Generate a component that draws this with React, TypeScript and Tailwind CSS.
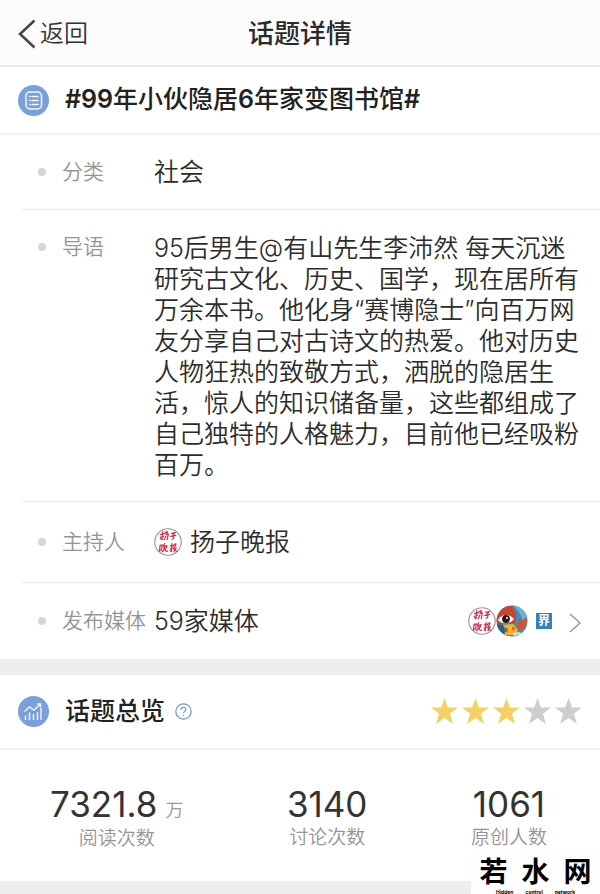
import type { ReactNode } from 'react';

function SealLogo() {
  return (
    <svg viewBox="0 0 28 28" className="h-7 w-7 shrink-0" role="img" aria-label="扬子晚报">
      <circle cx="14" cy="14" r="13.2" fill="#fff" stroke="#a58a90" strokeWidth="1.1" />
      <g fill="none" stroke="#c9354c" strokeWidth="1.1" strokeLinecap="round" strokeLinejoin="round" transform="translate(-2.4 -2) scale(1.14)">
        <path d="M7.5 7.5l4-1M9.8 5l-.6 7-1.4-.8M7.6 10l3-1M12 5.5l2-.5-1.5 2.5 2.2-.5-1 5M12.5 9l-1.5 3" />
        <path d="M17.5 6.5l3.2-.8-2 2.4c1.6 1 .8 3.6-.8 3.4M16.8 9.2l4.4-.9" />
        <path d="M7.5 17l-.6 5M7.3 17l2-.4-.5 4.4-1.8.5M11.5 15.5l-1.2 2M10.5 18l3-.7-.5 2-2.2.4M11.7 18c0 2.5-.8 3.6-2.3 4.5M12 20.5c0 1.5.8 2 2 1.5" />
        <path d="M16.3 17.5l3-.6M17.9 15.5l-.6 7-1-.6M16.2 20.3l2.3-.8M19.8 16l1.6-.4-.6 2-1 .2v4.7M20 19c.3 1.5 1 2.8 2 3.3M21.6 19l-2 3" />
      </g>
    </svg>
  );
}

function MascotLogo() {
  return (
    <svg viewBox="0 0 32 32" className="h-8 w-8 shrink-0" role="img" aria-label="媒体头像">
      <defs>
        <clipPath id="mascot">
          <circle cx="16" cy="16" r="15.5" />
        </clipPath>
      </defs>
      <g clipPath="url(#mascot)">
        <path fill="#3f8fb8" d="M0 0h32v32H0z" />
        <path fill="#6fb3cf" d="M17 0l6 7 4 8 5-3V0z" />
        <path fill="#c9432f" d="M0 14C2 5 8 0 17 1c0 3 2 5 3 8l-1 9-17 2z" />
        <path fill="#d8502f" d="M18 23c4-1 5-5 5-11l3 4 5-4c0 8-3 13-10 14z" />
        <path fill="#27637f" d="M0 19l7 1 4 12H4z" />
        <path fill="#f1b52e" d="M7 20l10-1 5 6-2 5H8l2-5z" />
        <path fill="#c9432f" d="M9 22l3 2-1 4-2-2zM16 22l3 1-2 3z" />
        <path fill="#fff" d="M2 15c3-6 11-7 16-1-4 5-12 6-16 1z" />
        <circle cx="10" cy="14" r="3.9" fill="#1c1a20" />
        <circle cx="11" cy="13" r="1" fill="#fff" />
        <path fill="#bfe0ee" d="M16 28l8-1 2 2-8 2z" />
      </g>
    </svg>
  );
}

function Row({ label, children, top = false }: { label: string; children: ReactNode; top?: boolean }) {
  return (
    <div className={top ? 'flex items-start' : 'flex items-center'}>
      <dt className="flex h-8 w-[132px] shrink-0 items-center gap-4 whitespace-nowrap text-[21px] leading-8 font-[350] text-[#959595]">
        <span className="ml-4 h-2 w-2 shrink-0 rounded-full bg-[#d6d6d6]" />
        {label}
      </dt>
      <dd className="flex min-w-0 flex-1 items-center text-[25px] leading-[31px] font-[350] text-[#2c2c2c]">{children}</dd>
    </div>
  );
}

function Star({ on }: { on: boolean }) {
  return (
    <svg viewBox="0 0 27 27" className="h-[27px] w-[27px]" fill={on ? '#f6cf66' : '#cdcdcd'}>
      <path d="M13.5 0l3.4 9.500H27l-8.100 6.200 3.100 10.300-8.500-6-8.500 6 3.100-10.300L0 9.500h10.100z" />
    </svg>
  );
}

function Stat({ value, unit, label }: { value: string; unit?: string; label: string }) {
  return (
    <div className="flex flex-col items-center">
      <dt className="order-last text-[19px] leading-7 font-[350] text-[#959595]">{label}</dt>
      <dd className="text-[35px] leading-10 text-[#333]">
        {value}
        {unit && <span className="ml-2 text-lg font-[350] text-[#999]">{unit}</span>}
      </dd>
    </div>
  );
}

export default function App() {
  return (
    <div className="min-h-screen bg-[#eee] font-['Inter','Noto_Sans_CJK_SC',sans-serif]" lang="zh-CN">
      <header className="grid h-[67px] grid-cols-[1fr_auto_1fr] items-center border-b-2 border-[#e9e9e9] bg-[#fbfbfb] px-[18px] pt-[2px]">
        <button type="button" className="flex items-center gap-1 text-2xl font-[350] text-[#333]">
          <svg viewBox="0 0 18 30" className="h-[30px] w-[18px]" fill="none" stroke="#444" strokeWidth="2.5">
            <path d="M16.5 1.5L2 15l14.5 13.5" />
          </svg>
          返回
        </button>
        <h1 className="text-[26px] font-medium text-[#2a2a2a]">话题详情</h1>
      </header>

      <section className="bg-white">
        <div className="flex h-[68px] items-center gap-4 border-b-2 border-[#f3f3f3] px-[18px]">
          <svg viewBox="0 0 31 31" className="h-[31px] w-[31px] shrink-0">
            <circle cx="15.5" cy="15.5" r="15.5" fill="#7b9fd8" />
            <g fill="none" stroke="#f4f8ff" strokeWidth="1.5" strokeLinecap="round">
              <rect x="8" y="7" width="15.5" height="17" rx="4" />
              <path d="M11.5 11.5h.5M14 11.5h6M11.5 15.5h.5M14 15.5h6M11.5 19.5h.5M14 19.5h6" />
            </g>
          </svg>
          <h2 className="text-[25px] font-medium text-[#222]">
            <span className="font-semibold">#99</span>年小伙隐居<span className="font-semibold">6</span>年家变图书馆
            <span className="font-semibold">#</span>
          </h2>
        </div>

        <dl className="ml-[22px] divide-y divide-[#ebebeb]">
          <div className="py-[21px]">
            <Row label="分类">社会</Row>
          </div>
          <div className="pt-[21px] pr-[18px] pb-5">
            <Row label="导语" top>
              <p className="pt-[2px]">
                95后男生@有山先生李沛然 每天沉迷研究古文化、历史、国学，现在居所有万余本书。他化身“赛博隐士”向百万网友分享自己对古诗文的热爱。他对历史人物狂热的致敬方式，洒脱的隐居生活，惊人的知识储备量，这些都组成了自己独特的人格魅力，目前他已经吸粉百万。
              </p>
            </Row>
          </div>
          <div className="py-6">
            <Row label="主持人">
              <span className="flex items-center gap-2">
                <SealLogo />
                扬子晚报
              </span>
            </Row>
          </div>
          <div className="py-[22px] pr-[18px]">
            <Row label="发布媒体">
              <span className="flex-1">59家媒体</span>
              <span className="flex items-center">
                <SealLogo />
                <MascotLogo />
                <span className="mx-2 flex h-4 w-4 items-center justify-center bg-[#3482bd] text-xs leading-4 font-bold text-white">界</span>
                <button type="button" aria-label="查看全部媒体" className="ml-2 pt-1">
                  <svg viewBox="0 0 14 20" className="h-5 w-[14px]" fill="none" stroke="#999" strokeWidth="1.5">
                    <path d="M2 1l10 9L2 19" />
                  </svg>
                </button>
              </span>
            </Row>
          </div>
        </dl>
      </section>

      <section className="mt-4 bg-white">
        <div className="flex h-[75px] items-center border-b-2 border-[#f3f3f3] px-[18px]">
          <svg viewBox="0 0 31 31" className="h-[31px] w-[31px] shrink-0">
            <circle cx="15.5" cy="15.5" r="15.5" fill="#7b9fd8" />
            <g fill="none" stroke="#eef4ff" strokeWidth="1.4">
              <path d="M7.5 24v-4.500M11.5 24v-7.500M15.5 24v-6M19.5 24v-8M23 24V12" />
              <path d="M6.5 15.5l5-4.500 4.500 3 6-5.500M19 8h3.500v3.500" />
            </g>
          </svg>
          <h2 className="ml-4 text-[25px] font-medium text-[#222]">话题总览</h2>
          <button type="button" aria-label="说明" className="ml-[10px]">
            <svg viewBox="0 0 17 17" className="h-[17px] w-[17px]" fill="none" stroke="#6f96cf" strokeWidth="1.2">
              <circle cx="8.5" cy="8.5" r="7.7" />
              <path d="M6 6.8c0-3.200 5-3.200 5-.3 0 1.800-2.500 1.900-2.500 3.800M8.5 11.7v1.300" />
            </svg>
          </button>
          <div className="ml-auto flex gap-1" role="img" aria-label="3 / 5">
            {[1, 2, 3, 4, 5].map((n) => (
              <Star key={n} on={n <= 3} />
            ))}
          </div>
        </div>
        <dl className="flex justify-between pt-[34px] pr-[53px] pb-7 pl-[50px]">
          <Stat value="7321.8" unit="万" label="阅读次数" />
          <Stat value="3140" label="讨论次数" />
          <Stat value="1061" label="原创人数" />
        </dl>
      </section>

      <div className="fixed right-0 bottom-0 flex h-10 w-[129px] flex-col items-center overflow-hidden bg-[#fdfdfd] text-black">
        <span className="flex gap-[14px] text-[28px] leading-9 font-bold">
          <span>若</span>
          <span>水</span>
          <span>网</span>
        </span>
        <span className="flex gap-3 text-[5px] leading-[4px] font-bold">
          <span>Hidden</span>
          <span>control</span>
          <span>network</span>
        </span>
      </div>
    </div>
  );
}
